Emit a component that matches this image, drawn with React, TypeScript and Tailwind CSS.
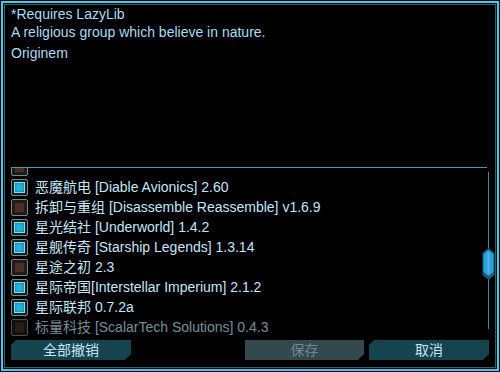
import React from 'react'

const mods = [
  { name: '—', on: false, hidden: true },
  { name: '恶魔航电 [Diable Avionics] 2.60', on: true },
  { name: '拆卸与重组 [Disassemble Reassemble] v1.6.9', on: false },
  { name: '星光结社 [Underworld] 1.4.2', on: true },
  { name: '星舰传奇 [Starship Legends] 1.3.14', on: true },
  { name: '星途之初 2.3', on: false },
  { name: '星际帝国[Interstellar Imperium] 2.1.2', on: true },
  { name: '星际联邦 0.7.2a', on: true },
  { name: '标量科技 [ScalarTech Solutions] 0.4.3', on: false, dim: true },
]

function Check({ on }: { on: boolean }) {
  return (
    <div className="w-[17px] h-[17px] shrink-0 rounded-[2px] border border-[#7a8488] bg-[#1b1b1b] p-[2px]">
      {on ? (
        <div className="w-full h-full bg-[#29b4dc] border border-[#74e4ff] shadow-[inset_0_0_3px_#0a6a8c]" />
      ) : (
        <div className="w-full h-full bg-[#3b2520] border border-[#2a1a16] bg-[radial-gradient(#5a3a30_0.6px,transparent_0.8px)] bg-[length:2px_2px]" />
      )}
    </div>
  )
}

export default function App() {
  return (
    <div
      className="w-[500px] h-[372px] bg-black p-[1px] text-[14px] leading-none"
      style={{ fontFamily: '"Liberation Sans", "Noto Sans CJK SC", sans-serif' }}
    >
      <div className="w-full h-full border-2 border-[#3ccdf5] p-[1px]">
        <div className="w-full h-full border border-[#9ae6ff]/40 bg-black flex flex-col relative">
          {/* description */}
          <div className="px-[6px] text-[#a9dcf3] h-[162px]">
            <div className="leading-[18px]">*Requires LazyLib</div>
            <div className="leading-[18px]">A religious group which believe in nature.</div>
            <div className="mt-[3px] leading-[18px]">Originem</div>
          </div>
          <div className="mx-[6px] h-px bg-[#3a9cbd] w-[476px]" />

          {/* list */}
          <div className="flex h-[169px]">
            <div className="flex-1 overflow-hidden">
              <div className="mt-[-11px] pl-[6px] flex flex-col">
                {mods.map((m, i) => (
                  <div
                    key={i}
                    className={`h-[20px] flex items-center gap-[7px] ${m.dim ? 'opacity-60' : ''}`}
                  >
                    <Check on={m.on} />
                    {!m.hidden && <span className="text-[#c4e6f6] whitespace-nowrap">{m.name}</span>}
                  </div>
                ))}
              </div>
            </div>
            {/* scrollbar */}
            <div className="w-[13px] relative">
              <div className="absolute left-[6px] top-[4px] bottom-[8px] w-px bg-[#2d8fae]" />
              <svg className="absolute left-[0px] top-[80px]" width="13" height="32" viewBox="0 0 13 32">
                <polygon points="6.5,0 12.5,5 12.5,27 6.5,32 0.5,27 0.5,5" fill="#1d5a7a" />
                <polygon points="6.5,2 11.5,6 11.5,24 6.5,28 1.5,24 1.5,6" fill="#2aa0d6" />
                <rect x="5.5" y="4" width="2" height="22" fill="#49b8e8" />
              </svg>
            </div>
          </div>

          {/* buttons */}
          <div className="flex items-center px-[6px] mt-[3px] text-[14px]">
            <button className="w-[120px] h-[20px] bg-[#17434f] text-[#c4e6f6] [clip-path:polygon(5px_0,100%_0,100%_calc(100%-6px),calc(100%-6px)_100%,0_100%,0_5px)]">
              全部撤销
            </button>
            <div className="flex-1" />
            <button className="w-[119px] h-[20px] bg-[#33494e] text-[#6f8a90] [clip-path:polygon(0_0,100%_0,100%_calc(100%-6px),calc(100%-6px)_100%,0_100%)]">
              保存
            </button>
            <button className="ml-[5px] w-[120px] h-[20px] bg-[#17434f] text-[#c4e6f6] [clip-path:polygon(5px_0,100%_0,100%_calc(100%-6px),calc(100%-6px)_100%,0_100%,0_5px)]">
              取消
            </button>
          </div>
        </div>
      </div>
    </div>
  )
}
